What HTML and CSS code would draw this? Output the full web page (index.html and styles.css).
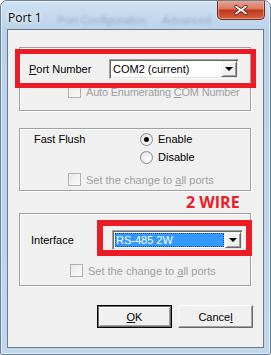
FILE: index.html
```html
<!DOCTYPE html>
<html>

<head>
	<title>Port 1</title>
	<link rel="stylesheet" href="styles.css">
</head>

<body>
	<div class="window">
		<div class="titlebar">
			<span class="title">Port 1</span>
			<span class="ghost">Port Configuration</span>
			<span class="ghost">Advanced</span>
			<div class="close">
				<svg width="16" height="12" viewBox="0 0 16 12">
					<path d="M3 1 L8 4.5 L13 1 L15 2.5 L10.5 6 L15 9.5 L13 11 L8 7.5 L3 11 L1 9.5 L5.5 6 L1 2.5 Z" fill="#fff" stroke="#5a2318" stroke-width="1" stroke-linejoin="round" />
				</svg>
			</div>
		</div>

		<div class="client">
			<div class="group port-group">
				<div class="row">
					<span class="label port-label"><u>P</u>ort Number</span>
					<div class="combo port-combo">
						<span class="value">COM2 (current)</span>
						<span class="drop"><i class="arrow"></i></span>
					</div>
				</div>
				<div class="check disabled auto-check"><span class="box"></span><span>Auto Enumerating <u>C</u>OM Number</span></div>
			</div>

			<div class="group flush-group">
				<div class="flush-grid">
					<span class="label">Fast Flush</span>
					<label class="radio"><span class="dot checked"></span>Enable</label>
					<span></span>
					<label class="radio"><span class="dot"></span>Disable</label>
				</div>
				<div class="check disabled flush-check"><span class="box"></span><span>Set the change to <u>a</u>ll ports</span></div>
			</div>

			<div class="note">2 WIRE</div>

			<div class="group iface-group">
				<div class="row">
					<span class="label iface-label">Interface</span>
					<div class="combo iface-combo">
						<span class="value selected">RS-485 2W</span>
						<span class="drop"><i class="arrow"></i></span>
					</div>
				</div>
				<div class="check disabled iface-check"><span class="box"></span><span>Set the change to <u>a</u>ll ports</span></div>
			</div>

			<div class="actions">
				<button class="default"><u>O</u>K</button>
				<button>Cance<u>l</u></button>
			</div>

			<div class="mark mark-port"></div>
			<div class="mark mark-iface"></div>
		</div>
	</div>
</body>

</html>
```

FILE: styles.css
```css
body {
	margin: 0;
	font-family: "Liberation Sans", Arial, sans-serif;
	font-size: 11px;
	color: #000;
	background-color: #fff;
}

.window {
	width: 271px;
	height: 355px;
	box-sizing: border-box;
	border: 1px solid #6a7f98;
	border-radius: 7px 7px 2px 2px;
	background: linear-gradient(#cfe0f2, #bad2ea 30px, #c0d6ed);
	box-shadow: inset 0 0 0 1px rgba(255, 255, 255, 0.6);
	overflow: hidden;
}

.titlebar {
	height: 28px;
	display: flex;
	align-items: flex-start;
	white-space: nowrap;
}

.title {
	font-family: "Open Sans", sans-serif;
	font-size: 12px;
	margin: 8px 0 0 7px;
	color: #000;
	text-shadow: 0 0 6px #fff, 0 0 3px #fff;
}

.ghost {
	font-size: 11px;
	color: #7b90a8;
	filter: blur(1.4px);
	margin: 13px 0 0 16px;
	opacity: 0.6;
}

.close {
	flex: none;
	margin: -1px 5px 0 auto;
	width: 48px;
	height: 20px;
	box-sizing: border-box;
	border: 1px solid #6e2a20;
	border-top: none;
	border-radius: 0 0 5px 5px;
	background: linear-gradient(#e9a99a, #d9795f 45%, #c2391c 55%, #d36143);
	box-shadow: inset 0 0 0 1px rgba(255, 200, 180, 0.5);
	display: flex;
	align-items: center;
	justify-content: center;
}

.client {
	position: relative;
	margin: 0 6px;
	height: 319px;
	box-sizing: border-box;
	border: 1px solid #6d7a88;
	background-color: #f0f0f0;
	white-space: nowrap;
}

.group {
	margin-left: 11px;
	width: 232px;
	box-sizing: border-box;
	border: 1px solid #a0a0a0;
	box-shadow: inset 1px 1px 0 #fff, 1px 1px 0 #fff;
}

.row {
	display: flex;
	align-items: center;
	height: 20px;
}

.label {
	display: inline-block;
}

.port-group {
	margin-top: 17px;
	height: 64px;
	padding: 11px 0 0 9px;
}

.port-label {
	width: 80px;
}

.combo {
	display: flex;
	height: 20px;
	box-sizing: border-box;
	border: 1px solid;
	border-color: #a0a0a0 #fff #fff #a0a0a0;
	box-shadow: inset 1px 1px 0 #696969, inset -1px -1px 0 #e3e3e3;
	background-color: #fff;
	padding: 2px;
}

.port-combo {
	width: 130px;
}

.value {
	flex: 1;
	line-height: 14px;
	padding-left: 1px;
}

.value.selected {
	background-color: #3399ff;
	color: #fff;
	outline: 1px dotted #1a4a80;
	outline-offset: -1px;
	margin-right: 1px;
}

.drop {
	width: 16px;
	height: 16px;
	margin: -1px -1px 0 0;
	box-sizing: border-box;
	background-color: #f0f0f0;
	border: 1px solid;
	border-color: #f0f0f0 #696969 #696969 #f0f0f0;
	box-shadow: inset 1px 1px 0 #fff, inset -1px -1px 0 #a0a0a0;
	display: flex;
	align-items: center;
	justify-content: center;
}

.arrow {
	width: 0;
	height: 0;
	border-left: 4px solid transparent;
	border-right: 4px solid transparent;
	border-top: 4px solid #000;
}

.check {
	display: flex;
	align-items: center;
	height: 13px;
}

.check .box {
	width: 13px;
	height: 13px;
	box-sizing: border-box;
	border: 1px solid #b1b1b1;
	background: linear-gradient(135deg, #e8e8e8, #fafafa);
	margin-right: 5px;
}

.check.disabled {
	color: #a0a0a0;
}

.auto-check {
	margin: 6px 0 0 39px;
	letter-spacing: -0.2px;
}

.flush-group {
	margin-top: 17px;
	height: 63px;
	padding: 1px 0 0 14px;
}

.flush-grid {
	display: grid;
	grid-template-columns: 106px auto;
	grid-auto-rows: 18px;
	align-items: center;
}

.radio {
	display: flex;
	align-items: center;
}

.dot {
	width: 13px;
	height: 13px;
	box-sizing: border-box;
	border-radius: 50%;
	border: 1px solid #8a8a8a;
	background: radial-gradient(circle at 60% 65%, #fff, #dcdcdc);
	margin-right: 5px;
	display: flex;
	align-items: center;
	justify-content: center;
}

.dot.checked::after {
	content: "";
	width: 5px;
	height: 5px;
	border-radius: 50%;
	background-color: #000;
}

.flush-check {
	margin: 7px 0 0 34px;
}

.note {
	height: 22px;
	line-height: 22px;
	padding-left: 178px;
	font-family: "Open Sans", sans-serif;
	font-weight: bold;
	font-size: 16px;
	color: #ed1c24;
}

.iface-group {
	height: 73px;
	padding: 16px 0 0 11px;
}

.iface-label {
	width: 81px;
}

.iface-combo {
	width: 131px;
}

.iface-check {
	margin: 14px 0 0 39px;
}

.actions {
	display: flex;
	gap: 6px;
	margin: 19px 0 0 89px;
}

button {
	width: 75px;
	height: 23px;
	padding: 0;
	font-family: "Liberation Sans", Arial, sans-serif;
	font-size: 11px;
	color: #000;
	background-color: #f0f0f0;
	border: 1px solid;
	border-color: #fff #696969 #696969 #fff;
	box-shadow: inset -1px -1px 0 #a0a0a0;
}

button.default {
	outline: 1px solid #000;
	outline-offset: -1px;
	border-width: 2px;
	border-color: #696969;
	box-shadow: inset 1px 1px 0 #fff, inset -1px -1px 0 #a0a0a0;
}

.mark {
	position: absolute;
	box-sizing: border-box;
	border: 5px solid #ed1c24;
}

.mark-port {
	left: 7px;
	top: 19px;
	width: 241px;
	height: 39px;
}

.mark-iface {
	left: 89px;
	top: 190px;
	width: 155px;
	height: 36px;
	border-width: 6px;
}
```
